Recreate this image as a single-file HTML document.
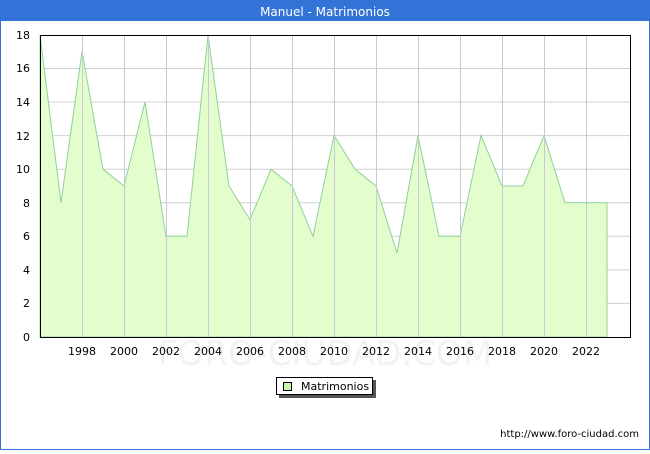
<!DOCTYPE html>
<html><head><meta charset="utf-8"><style>
body{margin:0;background:#fff;font-family:"DejaVu Sans","Liberation Sans",sans-serif;}
</style></head><body>
<svg width="650" height="450" xmlns="http://www.w3.org/2000/svg" font-family="DejaVu Sans, Liberation Sans, sans-serif">
<rect x="0" y="0" width="650" height="450" fill="#fff"/>
<rect x="0.5" y="0.5" width="649" height="449" fill="none" stroke="#3373d8"/>
<rect x="0" y="0" width="650" height="21" fill="#3373d8"/>
<text x="325" y="16" font-size="12" fill="#fff" text-anchor="middle">Manuel - Matrimonios</text>
<text x="325" y="365" font-size="34" fill="#f2f2f6" text-anchor="middle">FORO-CIUDAD.COM</text>
<g stroke="#d0d0d0" stroke-width="1">
<line x1="40" x2="631" y1="303.4" y2="303.4"/><line x1="40" x2="631" y1="269.9" y2="269.9"/>
<line x1="40" x2="631" y1="236.3" y2="236.3"/><line x1="40" x2="631" y1="202.8" y2="202.8"/>
<line x1="40" x2="631" y1="169.2" y2="169.2"/><line x1="40" x2="631" y1="135.6" y2="135.6"/>
<line x1="40" x2="631" y1="102" y2="102"/><line x1="40" x2="631" y1="68.5" y2="68.5"/>
</g>
<polygon fill="#e3fdcc" stroke="#8fd19a" stroke-width="1" points="40,337 40,35 61,202.8 82,51.7 103,169.2 124,186 145,102 166,236.3 187,236.3 208,35 229,186 250,219.5 271,169.2 292,186 313,236.3 334,135.6 355,169.2 376,186 397,253.1 418,135.6 439,236.3 460,236.3 481,135.6 502,186 523,186 544,135.6 565,202.8 586,202.8 607,202.8 607,337"/>
<g stroke="#c8c8d8" stroke-width="1">
<line x1="82.5" x2="82.5" y1="35" y2="337"/><line x1="124.5" x2="124.5" y1="35" y2="337"/>
<line x1="166.5" x2="166.5" y1="35" y2="337"/><line x1="208.5" x2="208.5" y1="35" y2="337"/>
<line x1="250.5" x2="250.5" y1="35" y2="337"/><line x1="292.5" x2="292.5" y1="35" y2="337"/>
<line x1="334.5" x2="334.5" y1="35" y2="337"/><line x1="376.5" x2="376.5" y1="35" y2="337"/>
<line x1="418.5" x2="418.5" y1="35" y2="337"/><line x1="460.5" x2="460.5" y1="35" y2="337"/>
<line x1="502.5" x2="502.5" y1="35" y2="337"/><line x1="544.5" x2="544.5" y1="35" y2="337"/>
<line x1="586.5" x2="586.5" y1="35" y2="337"/>
</g>
<rect x="40.5" y="35.5" width="590" height="302" fill="none" stroke="#000"/>
<g font-size="11" fill="#000" text-anchor="end">
<text x="30" y="341">0</text><text x="30" y="307">2</text><text x="30" y="274">4</text>
<text x="30" y="240">6</text><text x="30" y="207">8</text><text x="30" y="173">10</text>
<text x="30" y="140">12</text><text x="30" y="106">14</text><text x="30" y="72">16</text>
<text x="30" y="39">18</text>
</g>
<g font-size="11" fill="#000" text-anchor="middle">
<text x="82" y="355">1998</text><text x="124" y="355">2000</text><text x="166" y="355">2002</text>
<text x="208" y="355">2004</text><text x="250" y="355">2006</text><text x="292" y="355">2008</text>
<text x="334" y="355">2010</text><text x="376" y="355">2012</text><text x="418" y="355">2014</text>
<text x="460" y="355">2016</text><text x="502" y="355">2018</text><text x="544" y="355">2020</text>
<text x="586" y="355">2022</text>
</g>
<rect x="279" y="380" width="97" height="18" fill="#555"/>
<rect x="276.5" y="377.5" width="96" height="17" fill="#fff" stroke="#000"/>
<rect x="283.5" y="382.5" width="8" height="8" fill="#c8f5a8" stroke="#000"/>
<text x="301" y="390" font-size="11" fill="#000">Matrimonios</text>
<text x="639" y="437" font-size="10" fill="#000" text-anchor="end">http://www.foro-ciudad.com</text>
</svg>
</body></html>
